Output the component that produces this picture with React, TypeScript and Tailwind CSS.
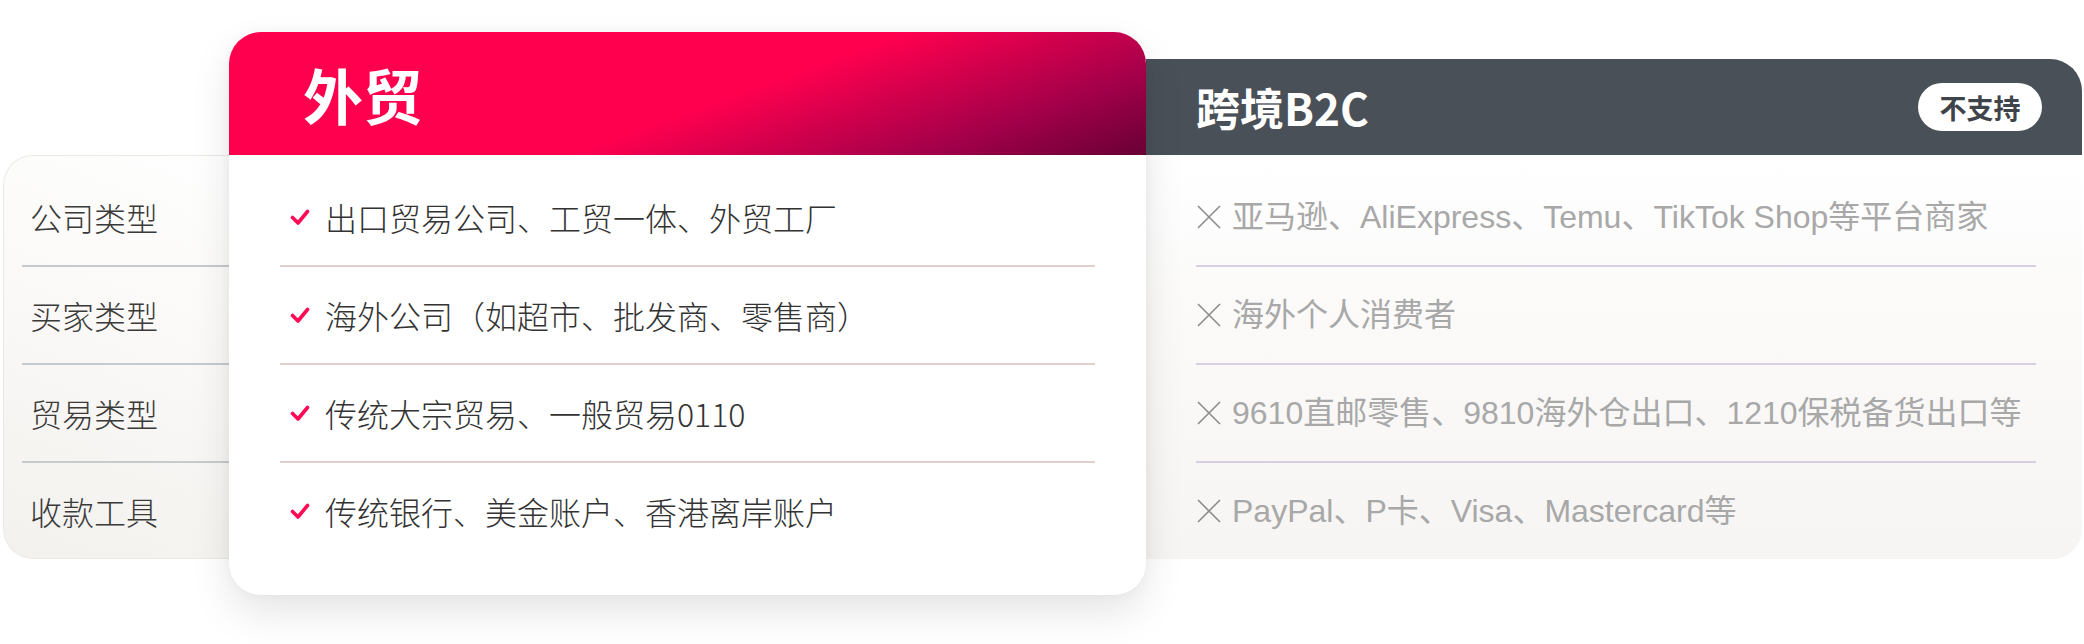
const rows = [
  {
    label: '公司类型',
    yes: '出口贸易公司、工贸一体、外贸工厂',
    no: '亚马逊、AliExpress、Temu、TikTok Shop等平台商家',
  },
  {
    label: '买家类型',
    yes: '海外公司（如超市、批发商、零售商）',
    no: '海外个人消费者',
  },
  {
    label: '贸易类型',
    yes: '传统大宗贸易、一般贸易0110',
    no: '9610直邮零售、9810海外仓出口、1210保税备货出口等',
  },
  {
    label: '收款工具',
    yes: '传统银行、美金账户、香港离岸账户',
    no: 'PayPal、P卡、Visa、Mastercard等',
  },
]

const font = "font-['Noto_Sans_CJK_SC','Noto_Sans',sans-serif]"

function CheckMark() {
  return (
    <svg width="20" height="17" viewBox="0 0 20 17" className="shrink-0">
      <path d="M2.5 8.5 L8 14 L17.5 2.5" fill="none" stroke="#ff0a55" strokeWidth="3.6" strokeLinecap="round" strokeLinejoin="round" />
    </svg>
  )
}

function Cross() {
  return (
    <svg width="24" height="24" viewBox="0 0 24 24" className="shrink-0">
      <path d="M1 1 L23 23 M23 1 L1 23" fill="none" stroke="#8c8c8c" strokeWidth="1.6" />
    </svg>
  )
}

export default function App() {
  return (
    <div className={`w-[2084px] h-[644px] bg-white overflow-hidden ${font}`}>
      <div className="flex items-start">
        {/* Left - row labels */}
        <div className="ml-[3px] mt-[155px] w-[266px] -mr-[40px] h-[404px] rounded-l-[30px] border border-r-0 border-[#ebebe6] bg-[linear-gradient(200deg,#ffffff_0%,#faf9f7_45%,#f2f1ee_100%)] pt-[13px]">
          {rows.map((row, i) => (
            <div key={row.label}>
              <div className="h-[96px] flex items-center pl-[26px] text-[32px] font-light text-[#3a3a3a] leading-none">
                {row.label}
              </div>
              {i < rows.length - 1 && <div className="ml-[18px] h-[2px] bg-[#c6cacd]" />}
            </div>
          ))}
        </div>

        {/* Middle - highlighted card */}
        <div className="relative z-10 mt-[32px] w-[917px] h-[563px] rounded-[32px] bg-white overflow-hidden shadow-[0_18px_40px_rgba(0,0,0,0.10),0_0_12px_rgba(0,0,0,0.04)]">
          <div className="h-[123px] flex items-center pl-[74px] bg-[linear-gradient(160deg,#ff004f_0%,#ff004f_54%,#d0004c_68%,#a3004a_82%,#680034_100%)]">
            <span className="text-[60px] font-bold text-white leading-none">外贸</span>
          </div>
          <div className="pt-[14px]">
            {rows.map((row, i) => (
              <div key={row.label}>
                <div className="h-[96px] flex items-center gap-[15px] pl-[61px] text-[32px] font-light text-[#333333] leading-none">
                  <CheckMark />
                  <span>{row.yes}</span>
                </div>
                {i < rows.length - 1 && <div className="mx-[51px] h-[2px] bg-[#e2cfcb]" />}
              </div>
            ))}
          </div>
        </div>

        {/* Right - unsupported column */}
        <div className="flex-1 mr-[2px] mt-[59px]">
          <div className="h-[96px] flex items-center justify-between pl-[50px] pr-[40px] bg-[#4a5058] rounded-tr-[32px]">
            <span className="text-[44px] font-bold text-white leading-none">跨境B2C</span>
            <span className="h-[48px] w-[124px] flex items-center justify-center rounded-full bg-white text-[27px] font-bold text-[#3f444a] leading-none">
              不支持
            </span>
          </div>
          <div className="h-[404px] rounded-br-[30px] bg-[linear-gradient(180deg,#ffffff_0%,#fbfaf9_40%,#f6f5f3_100%)] pt-[14px]">
            {rows.map((row, i) => (
              <div key={row.label}>
                <div className="h-[96px] flex items-center gap-[11px] pl-[51px] text-[32px] text-[#a8a8a8] leading-none whitespace-nowrap font-['Liberation_Sans','Noto_Sans_CJK_SC',sans-serif]">
                  <Cross />
                  <span>{row.no}</span>
                </div>
                {i < rows.length - 1 && <div className="ml-[50px] mr-[46px] h-[2px] bg-[#d8cfe2]" />}
              </div>
            ))}
          </div>
        </div>
      </div>
    </div>
  )
}
